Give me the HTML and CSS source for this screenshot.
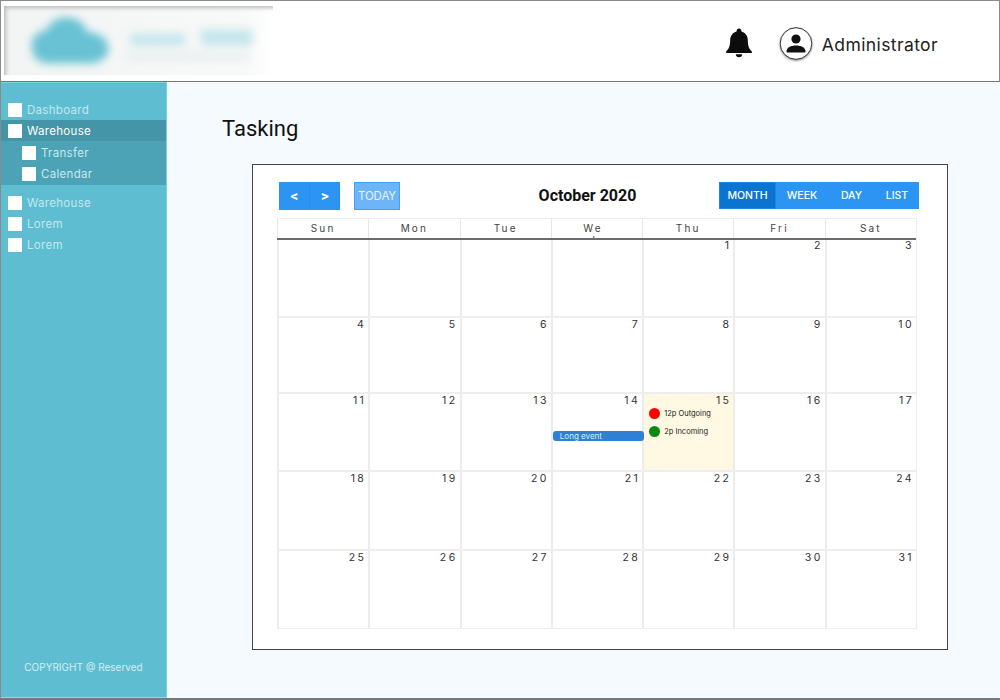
FILE: index.html
```html
<!DOCTYPE html>
<html lang="en">
<head>
<meta charset="utf-8">
<title>Tasking</title>
<link rel="stylesheet" href="styles.css">
</head>
<body>
<div class="frame">
  <header class="topbar">
    <div class="logo">
      <svg class="logo-art" viewBox="0 0 269 70" aria-hidden="true">
        <path class="cloud" d="M26 40c0-9 7-15 15-15 4-10 13-15 24-13 9 1 15 7 18 15 12 0 21 6 21 16 0 9-8 15-19 15H42c-10 0-16-8-16-18z"/>
        <rect class="word" x="126" y="28" width="56" height="12"/>
        <rect class="word" x="198" y="24" width="52" height="16"/>
        <rect class="tag" x="122" y="47" width="125" height="8"/>
      </svg>
    </div>
    <div class="top-actions">
      <svg class="bell" viewBox="0 0 28 30" aria-hidden="true"><path d="M14 0.500c-1.400 0-2.400 1-2.400 2.400v.7C7.600 4.700 5.200 8 5.200 12.200c0 6-1.500 8.800-4 11.300-.6.600-.2 1.500.6 1.500h24.400c.8 0 1.200-.9.600-1.500-2.500-2.500-4-5.300-4-11.300 0-4.200-2.400-7.500-6.400-8.600v-.7c0-1.400-1-2.400-2.400-2.400z"/><path d="M10.800 26.200h6.400c0 1.800-1.400 3.100-3.200 3.100s-3.200-1.300-3.200-3.100z"/></svg>
      <svg class="avatar" viewBox="0 0 34 34" aria-hidden="true"><circle cx="17" cy="16.500" r="15.800" fill="#fff" stroke="#333" stroke-width="1"/><circle cx="17" cy="12" r="4.600"/><path d="M7.500 24.500c0-4 4.300-6 9.500-6s9.500 2 9.500 6c0 .6-.4 1-1 1h-17c-.6 0-1-.4-1-1z"/></svg>
      <span class="user">Administrator</span>
    </div>
  </header>
  <div class="body-row">
    <nav class="sidebar">
      <ul class="menu">
        <li class="item"><span class="box"></span>Dashboard</li>
        <li class="item active"><span class="box"></span>Warehouse</li>
        <li class="submenu">
          <div class="item sub"><span class="box"></span>Transfer</div>
          <div class="item sub"><span class="box"></span>Calendar</div>
        </li>
        <li class="item after-sub"><span class="box"></span>Warehouse</li>
        <li class="item"><span class="box"></span>Lorem</li>
        <li class="item"><span class="box"></span>Lorem</li>
      </ul>
      <div class="copyright">COPYRIGHT @ Reserved</div>
    </nav>
    <main class="content">
      <h1 class="title">Tasking</h1>
      <section class="card">
        <div class="toolbar">
          <div class="left-tools">
            <div class="btn-group nav-group">
              <button class="btn nav-btn">&lt;</button>
              <button class="btn nav-btn">&gt;</button>
            </div>
            <button class="btn today">TODAY</button>
          </div>
          <h2 class="month-title">October 2020</h2>
          <div class="btn-group views">
            <button class="btn view current">MONTH</button>
            <button class="btn view">WEEK</button>
            <button class="btn view">DAY</button>
            <button class="btn view">LIST</button>
          </div>
        </div>
        <div class="calendar">
          <div class="dow-row">
            <div class="dow">Sun</div><div class="dow">Mon</div><div class="dow">Tue</div><div class="dow wed">We<br>d</div><div class="dow">Thu</div><div class="dow">Fri</div><div class="dow">Sat</div>
          </div>
          <div class="week w1">
            <div class="day"></div><div class="day"></div><div class="day"></div><div class="day"></div><div class="day"><span class="num">1</span></div><div class="day"><span class="num">2</span></div><div class="day"><span class="num">3</span></div>
          </div>
          <div class="week w2">
            <div class="day"><span class="num">4</span></div><div class="day"><span class="num">5</span></div><div class="day"><span class="num">6</span></div><div class="day"><span class="num">7</span></div><div class="day"><span class="num">8</span></div><div class="day"><span class="num">9</span></div><div class="day"><span class="num">10</span></div>
          </div>
          <div class="week w3">
            <div class="day"><span class="num">11</span></div><div class="day"><span class="num">12</span></div><div class="day"><span class="num">13</span></div>
            <div class="day"><span class="num">14</span><div class="long-event">Long event</div></div>
            <div class="day today-cell"><span class="num">15</span>
              <div class="event"><span class="dot red"></span>12p Outgoing</div>
              <div class="event"><span class="dot green"></span>2p Incoming</div>
            </div>
            <div class="day"><span class="num">16</span></div><div class="day"><span class="num">17</span></div>
          </div>
          <div class="week w4">
            <div class="day"><span class="num">18</span></div><div class="day"><span class="num">19</span></div><div class="day"><span class="num">20</span></div><div class="day"><span class="num">21</span></div><div class="day"><span class="num">22</span></div><div class="day"><span class="num">23</span></div><div class="day"><span class="num">24</span></div>
          </div>
          <div class="week w5">
            <div class="day"><span class="num">25</span></div><div class="day"><span class="num">26</span></div><div class="day"><span class="num">27</span></div><div class="day"><span class="num">28</span></div><div class="day"><span class="num">29</span></div><div class="day"><span class="num">30</span></div><div class="day"><span class="num">31</span></div>
          </div>
        </div>
      </section>
    </main>
  </div>
</div>
</body>
</html>
```
FILE: styles.css
```css
* { box-sizing: border-box; }
html, body { margin: 0; padding: 0; }
body { width: 1000px; height: 700px; overflow: hidden; font-family: "Inter", "Liberation Sans", sans-serif; background: #fff; }
.frame { width: 1000px; height: 700px; border-top: 1px solid #8a8a8a; border-left: 1px solid #8a8a8a; border-right: 1px solid #8a8a8a; border-bottom: 2px solid #777; display: flex; flex-direction: column; }

.topbar { height: 81px; flex: none; border-bottom: 1px solid #777; background: #fff; display: flex; justify-content: space-between; padding: 5px 61px 0 3px; }
.logo { width: 269px; height: 69px; overflow: hidden; background: linear-gradient(90deg, #f2f4f4 0%, #f8f9f9 90%, #fff 100%); box-shadow: inset 3px 3px 4px -1px #bbb; }
.logo-art { display: block; width: 269px; height: 69px; filter: blur(4.500px); }
.cloud { fill: #68c2d3; }
.word { fill: #c4e6ec; }
.tag { fill: #e9eded; }
.top-actions { display: flex; align-items: center; height: 76px; }
.bell { width: 28px; height: 30px; fill: #0c0c0c; margin-right: 26px; margin-top: -2px; }
.avatar { width: 34px; height: 34px; fill: #111; margin-right: 9px; filter: drop-shadow(0 1px 1px #888); }
.user { font-size: 17.500px; letter-spacing: 0.400px; color: #222; }

.body-row { flex: 1; display: flex; min-height: 0; }
.sidebar { width: 166px; flex: none; background: #5fbdd1; border-top: 1px solid #74d2e4; border-right: 1px solid #7ad0e0; border-bottom: 1px solid #7fe2f2; padding-top: 16px; display: flex; flex-direction: column; justify-content: space-between; color: #c2e8ef; }
.menu { list-style: none; margin: 0; padding: 0; }
.item { height: 21px; display: flex; align-items: center; padding-left: 7px; font-size: 11.500px; letter-spacing: 0.300px; }
.box { width: 14px; height: 14px; background: #fff; margin-right: 5px; flex: none; }
.active { background: #4595a8; color: #fff; }
.submenu { background: #4ba3b5; padding: 1px 0; height: 44px; }
.sub { padding-left: 21px; color: #c9e8ee; }
.after-sub { margin-top: 7px; }
.copyright { font-size: 10px; text-align: center; padding: 0 0 24px 0; color: #d3eef3; }

.content { flex: 1; background: #f4fafd; padding: 34px 52px 0 55px; }
.title { margin: 0; font: 400 22px/26px "Roboto", sans-serif; color: #111; }
.card { margin: 22px 0 0 30px; width: 696px; height: 486px; background: #fff; border: 1px solid #444; padding: 16px 30px 0 26px; }
.toolbar { display: flex; justify-content: space-between; align-items: center; height: 29px; }
.left-tools { display: flex; gap: 14px; }
.btn-group { display: flex; }
.btn { border: 1px solid #2f96f2; background: #2c95f3; color: #fff; font-family: inherit; padding: 0; cursor: pointer; }
.nav-group { width: 61px; height: 28px; }
.nav-btn { width: 30.500px; font: 700 15px "Roboto", sans-serif; border-color: #2c95f3; border-right-color: #2a8ee8; }
.today { width: 46px; height: 28px; background: #6db5f7; border-color: #3fa2f8; font-size: 11.500px; letter-spacing: -0.100px; color: #e6f3fd; }
.month-title { margin: 0 0 1px 56px; font: 700 16px "Roboto", sans-serif; color: #111; }
.views { height: 27px; margin-right: -2px; }
.view { font-size: 10.500px; font-weight: 500; height: 27px; width: 52px; border-color: #2c95f3; }
.view.current { width: 57px; background: #0a74d0; border-color: #1e86e4; }
.view:nth-child(3) { width: 47px; }
.view:nth-child(4) { width: 44px; }

.calendar { margin: 8px 0 0 -2px; width: 640px; border-right: 1px solid #eee; }
.dow-row, .week { display: grid; grid-template-columns: repeat(7, 1fr); }
.dow-row { height: 22px; border-top: 1px solid #eee; border-bottom: 2px solid #6c6c6c; }
.dow { border-left: 1px solid #e6e6e6; height: 19px; overflow: hidden; text-align: center; font-size: 10px; line-height: 18px; letter-spacing: 2.200px; color: #444; }
.wed { line-height: 12px; padding: 3px 8px 0 0; }
.week { border-bottom: 2px solid #eee; }
.w1 { height: 78px; }
.w2 { height: 76px; }
.w3 { height: 78px; }
.w4 { height: 79px; }
.w5 { height: 78px; border-bottom-width: 1px; }
.day { border-left: 2px solid #ececec; display: flex; flex-direction: column; padding-top: 1px; min-width: 0; }
.w1 .day { padding-top: 0; }
.num { display: block; text-align: right; font-size: 10.500px; line-height: 12px; letter-spacing: 2.400px; color: #333; padding-right: 2px; }
.today-cell { background: #fff9e3; padding-bottom: 0; }
.long-event { margin: 24px -2px 0 0; height: 10px; background: #2f7fd6; border-radius: 3px; color: #dcebf8; font-size: 8px; line-height: 10px; padding-left: 7px; white-space: nowrap; position: relative; }
.event { display: flex; align-items: center; font-size: 7.500px; color: #222; height: 11px; padding-left: 5px; margin-bottom: 7px; white-space: nowrap; position: relative; top: 1px; }
.dot { width: 11px; height: 11px; border-radius: 50%; margin-right: 4px; flex: none; }
.red { background: #f00; }
.green { background: #0a8a10; }
```
